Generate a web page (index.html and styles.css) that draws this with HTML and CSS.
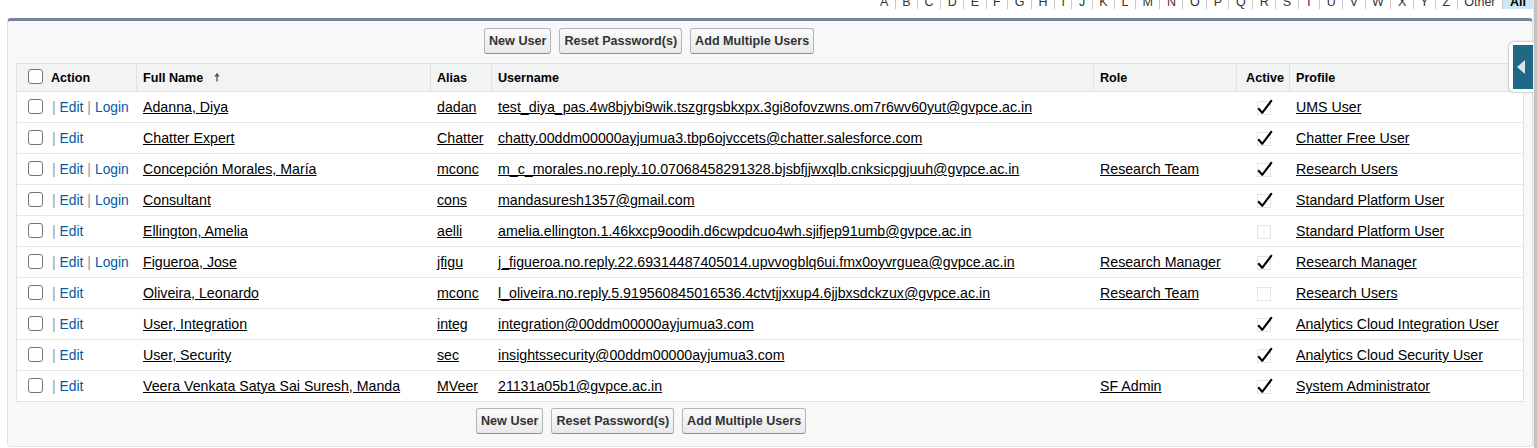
FILE: index.html
```html
<!DOCTYPE html>
<html>
<head>
<meta charset="utf-8">
<title>Users</title>
<link rel="stylesheet" href="styles.css">
</head>
<body>
<div class="page">
  <div class="rolodex">
    <span class="ltr first">A</span><span class="ltr">B</span><span class="ltr">C</span><span class="ltr">D</span><span class="ltr">E</span><span class="ltr">F</span><span class="ltr">G</span><span class="ltr">H</span><span class="ltr">I</span><span class="ltr">J</span><span class="ltr">K</span><span class="ltr">L</span><span class="ltr">M</span><span class="ltr">N</span><span class="ltr">O</span><span class="ltr">P</span><span class="ltr">Q</span><span class="ltr">R</span><span class="ltr">S</span><span class="ltr">T</span><span class="ltr">U</span><span class="ltr">V</span><span class="ltr">W</span><span class="ltr">X</span><span class="ltr">Y</span><span class="ltr">Z</span><span class="ltr">Other</span><span class="ltr all">All</span>
  </div>

  <div class="panel">
    <div class="btnrow btnrow-top">
      <button class="btn">New User</button>
      <button class="btn">Reset Password(s)</button>
      <button class="btn">Add Multiple Users</button>
    </div>

    <table class="list">
      <thead>
        <tr>
          <th class="c-act"><span class="cb"></span><span class="hlabel">Action</span></th>
          <th class="c-name">Full Name <svg class="sort" width="8" height="10" viewBox="0 0 8 10"><path d="M4 1.5 V9.5" stroke="#555" stroke-width="1.3"/><path d="M1.2 4.6 L4 1 L6.8 4.6 Z" fill="#555"/></svg></th>
          <th class="c-alias">Alias</th>
          <th class="c-user">Username</th>
          <th class="c-role">Role</th>
          <th class="c-active">Active</th>
          <th class="c-prof">Profile</th>
        </tr>
      </thead>
      <tbody>
        <tr>
          <td class="c-act"><span class="cb"></span>&nbsp;<span class="sep">|</span>&nbsp;<a class="act">Edit</a>&nbsp;<span class="sep">|</span>&nbsp;<a class="act">Login</a></td>
          <td><a class="dl">Adanna, Diya</a></td>
          <td><a class="dl">dadan</a></td>
          <td><a class="dl">test_diya_pas.4w8bjybi9wik.tszgrgsbkxpx.3gi8ofovzwns.om7r6wv60yut@gvpce.ac.in</a></td>
          <td></td>
          <td class="c-active"><svg class="chk" width="20" height="18" viewBox="0 0 20 18"><rect x="2.5" y="3.5" width="13" height="13" fill="none" stroke="#c8c8c8" stroke-dasharray="1 1"/><path d="M3.2 10.2 L7.2 14.8 L16.8 2.2" fill="none" stroke="#000" stroke-width="2.1" stroke-linejoin="round"/></svg></td>
          <td><a class="dl">UMS User</a></td>
        </tr>
        <tr>
          <td class="c-act"><span class="cb"></span>&nbsp;<span class="sep">|</span>&nbsp;<a class="act">Edit</a></td>
          <td><a class="dl">Chatter Expert</a></td>
          <td><a class="dl">Chatter</a></td>
          <td><a class="dl">chatty.00ddm00000ayjumua3.tbp6ojvccets@chatter.salesforce.com</a></td>
          <td></td>
          <td class="c-active"><svg class="chk" width="20" height="18" viewBox="0 0 20 18"><rect x="2.5" y="3.5" width="13" height="13" fill="none" stroke="#c8c8c8" stroke-dasharray="1 1"/><path d="M3.2 10.2 L7.2 14.8 L16.8 2.2" fill="none" stroke="#000" stroke-width="2.1" stroke-linejoin="round"/></svg></td>
          <td><a class="dl">Chatter Free User</a></td>
        </tr>
        <tr>
          <td class="c-act"><span class="cb"></span>&nbsp;<span class="sep">|</span>&nbsp;<a class="act">Edit</a>&nbsp;<span class="sep">|</span>&nbsp;<a class="act">Login</a></td>
          <td><a class="dl">Concepción Morales, María</a></td>
          <td><a class="dl">mconc</a></td>
          <td><a class="dl">m_c_morales.no.reply.10.07068458291328.bjsbfjjwxqlb.cnksicpgjuuh@gvpce.ac.in</a></td>
          <td><a class="dl">Research Team</a></td>
          <td class="c-active"><svg class="chk" width="20" height="18" viewBox="0 0 20 18"><rect x="2.5" y="3.5" width="13" height="13" fill="none" stroke="#c8c8c8" stroke-dasharray="1 1"/><path d="M3.2 10.2 L7.2 14.8 L16.8 2.2" fill="none" stroke="#000" stroke-width="2.1" stroke-linejoin="round"/></svg></td>
          <td><a class="dl">Research Users</a></td>
        </tr>
        <tr>
          <td class="c-act"><span class="cb"></span>&nbsp;<span class="sep">|</span>&nbsp;<a class="act">Edit</a>&nbsp;<span class="sep">|</span>&nbsp;<a class="act">Login</a></td>
          <td><a class="dl">Consultant</a></td>
          <td><a class="dl">cons</a></td>
          <td><a class="dl">mandasuresh1357@gmail.com</a></td>
          <td></td>
          <td class="c-active"><svg class="chk" width="20" height="18" viewBox="0 0 20 18"><rect x="2.5" y="3.5" width="13" height="13" fill="none" stroke="#c8c8c8" stroke-dasharray="1 1"/><path d="M3.2 10.2 L7.2 14.8 L16.8 2.2" fill="none" stroke="#000" stroke-width="2.1" stroke-linejoin="round"/></svg></td>
          <td><a class="dl">Standard Platform User</a></td>
        </tr>
        <tr>
          <td class="c-act"><span class="cb"></span>&nbsp;<span class="sep">|</span>&nbsp;<a class="act">Edit</a></td>
          <td><a class="dl">Ellington, Amelia</a></td>
          <td><a class="dl">aelli</a></td>
          <td><a class="dl">amelia.ellington.1.46kxcp9oodih.d6cwpdcuo4wh.sjifjep91umb@gvpce.ac.in</a></td>
          <td></td>
          <td class="c-active"><svg class="chk" width="20" height="18" viewBox="0 0 20 18"><rect x="2.5" y="3.5" width="13" height="13" fill="none" stroke="#c8c8c8" stroke-dasharray="1 1"/></svg></td>
          <td><a class="dl">Standard Platform User</a></td>
        </tr>
        <tr>
          <td class="c-act"><span class="cb"></span>&nbsp;<span class="sep">|</span>&nbsp;<a class="act">Edit</a>&nbsp;<span class="sep">|</span>&nbsp;<a class="act">Login</a></td>
          <td><a class="dl">Figueroa, Jose</a></td>
          <td><a class="dl">jfigu</a></td>
          <td><a class="dl">j_figueroa.no.reply.22.69314487405014.upvvogblq6ui.fmx0oyvrguea@gvpce.ac.in</a></td>
          <td><a class="dl">Research Manager</a></td>
          <td class="c-active"><svg class="chk" width="20" height="18" viewBox="0 0 20 18"><rect x="2.5" y="3.5" width="13" height="13" fill="none" stroke="#c8c8c8" stroke-dasharray="1 1"/><path d="M3.2 10.2 L7.2 14.8 L16.8 2.2" fill="none" stroke="#000" stroke-width="2.1" stroke-linejoin="round"/></svg></td>
          <td><a class="dl">Research Manager</a></td>
        </tr>
        <tr>
          <td class="c-act"><span class="cb"></span>&nbsp;<span class="sep">|</span>&nbsp;<a class="act">Edit</a></td>
          <td><a class="dl">Oliveira, Leonardo</a></td>
          <td><a class="dl">mconc</a></td>
          <td><a class="dl">l_oliveira.no.reply.5.919560845016536.4ctvtjjxxup4.6jjbxsdckzux@gvpce.ac.in</a></td>
          <td><a class="dl">Research Team</a></td>
          <td class="c-active"><svg class="chk" width="20" height="18" viewBox="0 0 20 18"><rect x="2.5" y="3.5" width="13" height="13" fill="none" stroke="#c8c8c8" stroke-dasharray="1 1"/></svg></td>
          <td><a class="dl">Research Users</a></td>
        </tr>
        <tr>
          <td class="c-act"><span class="cb"></span>&nbsp;<span class="sep">|</span>&nbsp;<a class="act">Edit</a></td>
          <td><a class="dl">User, Integration</a></td>
          <td><a class="dl">integ</a></td>
          <td><a class="dl">integration@00ddm00000ayjumua3.com</a></td>
          <td></td>
          <td class="c-active"><svg class="chk" width="20" height="18" viewBox="0 0 20 18"><rect x="2.5" y="3.5" width="13" height="13" fill="none" stroke="#c8c8c8" stroke-dasharray="1 1"/><path d="M3.2 10.2 L7.2 14.8 L16.8 2.2" fill="none" stroke="#000" stroke-width="2.1" stroke-linejoin="round"/></svg></td>
          <td><a class="dl">Analytics Cloud Integration User</a></td>
        </tr>
        <tr>
          <td class="c-act"><span class="cb"></span>&nbsp;<span class="sep">|</span>&nbsp;<a class="act">Edit</a></td>
          <td><a class="dl">User, Security</a></td>
          <td><a class="dl">sec</a></td>
          <td><a class="dl">insightssecurity@00ddm00000ayjumua3.com</a></td>
          <td></td>
          <td class="c-active"><svg class="chk" width="20" height="18" viewBox="0 0 20 18"><rect x="2.5" y="3.5" width="13" height="13" fill="none" stroke="#c8c8c8" stroke-dasharray="1 1"/><path d="M3.2 10.2 L7.2 14.8 L16.8 2.2" fill="none" stroke="#000" stroke-width="2.1" stroke-linejoin="round"/></svg></td>
          <td><a class="dl">Analytics Cloud Security User</a></td>
        </tr>
        <tr class="last">
          <td class="c-act"><span class="cb"></span>&nbsp;<span class="sep">|</span>&nbsp;<a class="act">Edit</a></td>
          <td><a class="dl">Veera Venkata Satya Sai Suresh, Manda</a></td>
          <td><a class="dl">MVeer</a></td>
          <td><a class="dl">21131a05b1@gvpce.ac.in</a></td>
          <td><a class="dl">SF Admin</a></td>
          <td class="c-active"><svg class="chk" width="20" height="18" viewBox="0 0 20 18"><rect x="2.5" y="3.5" width="13" height="13" fill="none" stroke="#c8c8c8" stroke-dasharray="1 1"/><path d="M3.2 10.2 L7.2 14.8 L16.8 2.2" fill="none" stroke="#000" stroke-width="2.1" stroke-linejoin="round"/></svg></td>
          <td><a class="dl">System Administrator</a></td>
        </tr>
      </tbody>
    </table>

    <div class="btnrow btnrow-bottom">
      <button class="btn">New User</button>
      <button class="btn">Reset Password(s)</button>
      <button class="btn">Add Multiple Users</button>
    </div>
  </div>
</div>

<div class="handle"><div class="handle-inner"><span class="tri"></span></div></div>
<div class="strip"></div>
</body>
</html>
```

FILE: styles.css
```css
* { box-sizing: border-box; }
html, body { margin: 0; padding: 0; background: #fff; }
body {
  font-family: "Liberation Sans", Arial, sans-serif;
  color: #000;
  width: 1537px;
  height: 448px;
  overflow: hidden;
  position: relative;
}

.page { padding: 0 4px 0 7px; }

/* alphabet bar */
.rolodex {
  display: flex;
  justify-content: flex-end;
  height: 13px;
  margin-top: -4px;
  font-size: 12.5px;
  line-height: 13px;
  color: #333;
}
.ltr {
  padding: 0 6.5px;
  border-left: 1px solid #c9c9c9;
}
.ltr.first { border-left: none; }
.ltr.all {
  background: #cfe6f6;
  font-weight: bold;
  color: #000;
  padding: 0 7px;
}

/* panel */
.panel {
  margin-top: 9px;
  width: 1526px;
  background: #f8f8f8;
  border: 1px solid #e1e1e1;
  border-top: 3px solid #76849d;
  border-radius: 4px;
  padding: 7px 8px 12px 8px;
}

.btnrow {
  display: flex;
  gap: 8px;
}
.btnrow-top { padding-left: 468px; margin-bottom: 9px; }
.btnrow-bottom { padding-left: 460px; margin-top: 6px; }

.btn {
  height: 26px;
  padding: 0 4px;
  font-family: "Liberation Sans", Arial, sans-serif;
  font-size: 12.6px;
  font-weight: bold;
  color: #333;
  background: linear-gradient(#fbfbfb, #e9e9e9);
  border: 1px solid #b5b5b5;
  border-bottom-color: #8f8f8f;
  border-radius: 3px;
}

/* table */
.list {
  width: 1508px;
  table-layout: fixed;
  border-collapse: separate;
  border-spacing: 0;
  background: #fff;
  border: 1px solid #e0e3e5;
}
.list th {
  height: 28px;
  background: #f2f3f3;
  border-bottom: 1px solid #e0e3e5;
  border-left: 1px solid #e0e3e5;
  font-size: 12.6px;
  font-weight: bold;
  text-align: left;
  padding: 0 6px;
  white-space: nowrap;
}
.list th.c-act { border-left: none; padding-left: 11px; }
.list td {
  height: 31px;
  border-bottom: 1px solid #e8e8e8;
  font-size: 14.2px;
  padding: 0 7px;
  white-space: nowrap;
  vertical-align: middle;
}
.list tr.last td { border-bottom: none; height: 30px; }
.list td.c-act { padding-left: 11px; }
.list td.c-act .cb { margin-right: 5px; }

.c-act { width: 119px; }
.c-name { width: 294px; }
.c-alias { width: 61px; }
.c-user { width: 602px; }
.c-role { width: 143px; }
.list .c-active { width: 53px; text-align: center; padding: 0 0 0 4px; }
.c-prof { width: 234px; }

.cb {
  display: inline-block;
  width: 15px;
  height: 15px;
  border: 1px solid #767676;
  border-radius: 3px;
  background: #fff;
  vertical-align: middle;
  position: relative;
  top: -1px;
}
.hlabel { margin-left: 8px; vertical-align: middle; }
.sort { margin-left: 6px; vertical-align: middle; position: relative; top: -1px; }

.sep { color: #9a9a9a; }
.act { color: #015ba7; text-decoration: none; font-size: 13.8px; }
.dl { color: #000; text-decoration: underline; }

.chk { display: inline-block; vertical-align: middle; }

/* sidebar handle */
.handle {
  position: absolute;
  left: 1508px;
  top: 41px;
  width: 25px;
  height: 52px;
  background: #fff;
  border: 1px solid #d4d4d4;
  border-right: none;
  border-radius: 6px 0 0 6px;
  padding: 3px 0 0 4px;
  box-shadow: 0 0 2px rgba(0,0,0,0.12);
}
.handle-inner {
  width: 20px;
  height: 44px;
  background: #1f6987;
  position: relative;
}
.tri {
  position: absolute;
  left: 4px;
  top: 15px;
  width: 0;
  height: 0;
  border-top: 7px solid transparent;
  border-bottom: 7px solid transparent;
  border-right: 8px solid #dfe3e6;
}

.strip {
  position: absolute;
  right: 0;
  top: 0;
  width: 4px;
  height: 448px;
  background: #c3c3c3;
  border-left: 1px solid #ececec;
}
```
